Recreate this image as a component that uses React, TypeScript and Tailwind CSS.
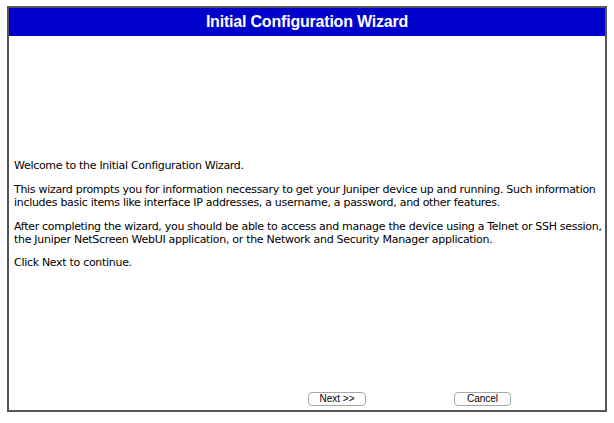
export default function App() {
  return (
    <div className="w-[614px] h-[423px] bg-white pt-[6px] pl-[7px]" style={{ fontFamily: '"DejaVu Sans", Verdana, sans-serif' }}>
      <div className="w-[600px] h-[406px] border-2 border-[#555555] flex flex-col">
        {/* Header */}
        <div className="h-[28px] bg-[#0000cc] flex items-center justify-center">
          <h1 className="text-white font-bold text-[16px] leading-none tracking-[-0.2px]" style={{ fontFamily: '"Liberation Sans", Arial, sans-serif' }}>
            Initial Configuration Wizard
          </h1>
        </div>

        {/* Body */}
        <div className="flex-1 pt-[123px] pl-[5px] pr-0 text-[11px] leading-[13px] tracking-[-0.3px] text-black">
          <p className="mb-[11px]">Welcome to the Initial Configuration Wizard.</p>
          <p className="mb-[11px]">
            This wizard prompts you for information necessary to get your Juniper device up and running. Such information includes basic items like interface IP addresses, a username, a password, and other features.
          </p>
          <p className="mb-[10px]">
            After completing the wizard, you should be able to access and manage the device using a Telnet or SSH session, the Juniper NetScreen WebUI application, or the Network and Security Manager application.
          </p>
          <p>Click Next to continue.</p>
        </div>

        {/* Buttons */}
        <div className="flex pl-[299px] pb-[4px] gap-[88px]" style={{ fontFamily: '"Liberation Sans", Arial, sans-serif' }}>
          <button className="w-[58px] h-[14px] border border-[#a8a8a8] rounded-[4px] bg-white text-[10px] leading-none text-black flex items-center justify-center">
            Next &gt;&gt;
          </button>
          <button className="w-[57px] h-[14px] border border-[#a8a8a8] rounded-[4px] bg-white text-[10px] leading-none text-black flex items-center justify-center">
            Cancel
          </button>
        </div>
      </div>
    </div>
  )
}
